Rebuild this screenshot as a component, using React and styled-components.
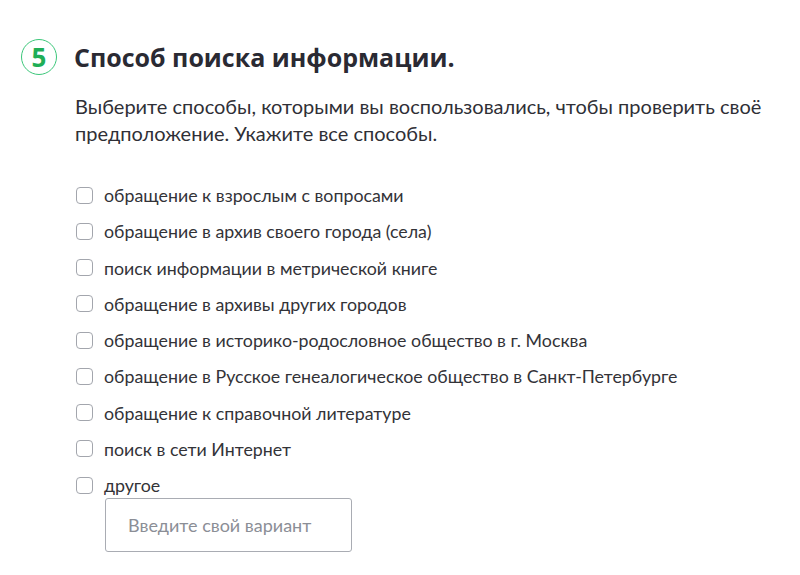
import React from "react";
import styled, { createGlobalStyle } from "styled-components";

const Global = createGlobalStyle`
  html, body { margin: 0; padding: 0; background: #fff; }
  body { font-family: Lato, "Noto Sans", sans-serif; }
`;

const Page = styled.div`
  padding: 39px 20px 0 21px;
  width: 800px;
  box-sizing: border-box;
`;

const Header = styled.div`
  display: flex;
  align-items: center;
  gap: 17px;
`;

const Badge = styled.div`
  width: 34px;
  height: 34px;
  border-radius: 50%;
  border: 1.5px solid #3cc77a;
  color: #1fae56;
  display: flex;
  align-items: center;
  justify-content: center;
  font-family: "Open Sans", sans-serif;
  font-weight: 700;
  font-size: 26px;
  line-height: 1;
`;

const Title = styled.h2`
  margin: 0;
  font-family: "Open Sans", sans-serif;
  font-weight: 700;
  font-size: 25px;
  color: #2a2a33;
`;

const Body = styled.div`
  padding-left: 54px;
`;

const Description = styled.p`
  margin: 18px 0 0;
  font-size: 20px;
  line-height: 27px;
  color: #2f2f36;
`;

const List = styled.div`
  margin-top: 30px;
  display: flex;
  flex-direction: column;
`;

const Row = styled.label`
  display: flex;
  align-items: center;
  height: 36.25px;
  gap: 11px;
  font-size: 17.8px;
  color: #333338;
`;

const Box = styled.span`
  width: 15px;
  height: 15px;
  border: 1.5px solid #a3a6ad;
  border-radius: 4px;
  margin-left: 1px;
  flex-shrink: 0;
`;

const Input = styled.input`
  margin: -5px 0 0 30px;
  width: 247px;
  height: 54px;
  box-sizing: border-box;
  border: 1px solid #a9acb3;
  border-radius: 3px;
  padding: 0 22px;
  font-family: Lato, sans-serif;
  font-size: 18px;
  color: #333;
  outline: none;
  &::placeholder { color: #8b8e96; }
`;

const options = [
  "обращение к взрослым с вопросами",
  "обращение в архив своего города (села)",
  "поиск информации в метрической книге",
  "обращение в архивы других городов",
  "обращение в историко-родословное общество в г. Москва",
  "обращение в Русское генеалогическое общество в Санкт-Петербурге",
  "обращение к справочной литературе",
  "поиск в сети Интернет",
  "другое",
];

export default function App() {
  return (
    <Page>
      <Global />
      <Header>
        <Badge>5</Badge>
        <Title>Способ поиска информации.</Title>
      </Header>
      <Body>
        <Description>
          Выберите способы, которыми вы воспользовались, чтобы проверить своё
          предположение. Укажите все способы.
        </Description>
        <List>
          {options.map((o) => (
            <Row key={o}>
              <Box />
              {o}
            </Row>
          ))}
        </List>
        <Input placeholder="Введите свой вариант" />
      </Body>
    </Page>
  );
}
